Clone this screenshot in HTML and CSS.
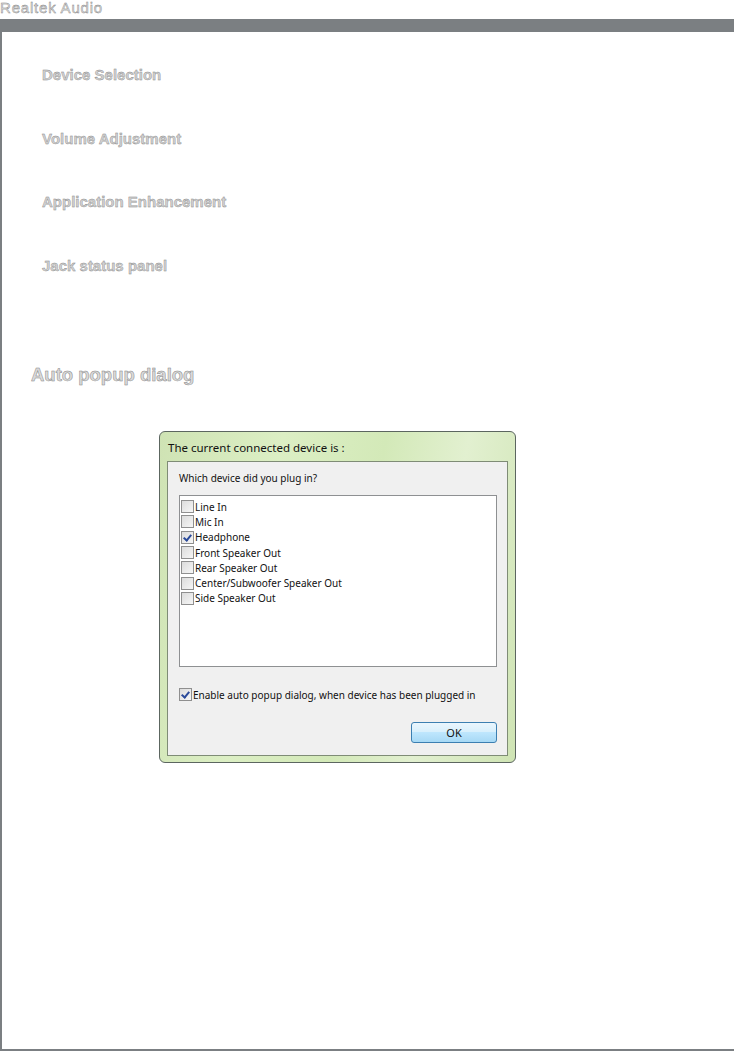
FILE: index.html
```html
<!DOCTYPE html>
<html lang="en">
<head>
  <meta charset="UTF-8" />
  <meta name="viewport" content="width=device-width, initial-scale=1.0"/>
  <title>Realtek Audio</title>
  <link rel="stylesheet" href="styles.css">
</head>
<body>
  <h1 class="page-title">Realtek Audio</h1>

  <div class="frame">
    <ul class="sections">
      <li>Device Selection</li>
      <li>Volume Adjustment</li>
      <li>Application Enhancement</li>
      <li>Jack status panel</li>
    </ul>

    <h2 class="subhead">Auto popup dialog</h2>

    <div class="dialog">
      <div class="dialog-title">The current connected device is :</div>
      <div class="dialog-body">
        <p class="question">Which device did you plug in?</p>
        <div class="listbox">
          <label class="item"><span class="box"></span>Line In</label>
          <label class="item"><span class="box"></span>Mic In</label>
          <label class="item"><span class="box checked"></span>Headphone</label>
          <label class="item"><span class="box"></span>Front Speaker Out</label>
          <label class="item"><span class="box"></span>Rear Speaker Out</label>
          <label class="item"><span class="box"></span>Center/Subwoofer Speaker Out</label>
          <label class="item"><span class="box"></span>Side Speaker Out</label>
        </div>
        <label class="item enable"><span class="box checked"></span>Enable auto popup dialog, when device has been plugged in</label>
        <div class="actions">
          <button class="ok-btn">OK</button>
        </div>
      </div>
    </div>
  </div>
</body>
</html>
```

FILE: styles.css
```css
body {
  margin: 0;
  background: #fff;
  font-family: 'Liberation Sans', Arial, sans-serif;
}

.page-title {
  margin: 0;
  height: 19px;
  font-size: 15px;
  line-height: 15px;
  letter-spacing: 0.8px;
  font-weight: normal;
  color: #dcdcdc;
  -webkit-text-stroke: 0.4px #7f7f7f;
}

.frame {
  height: 1032px;
  box-sizing: border-box;
  border-top: 13px solid #7b7f82;
  border-left: 2px solid #7b7f82;
  border-bottom: 2px solid #7b7f82;
  padding-top: 33px;
}

.sections {
  list-style: none;
  margin: 0;
  padding: 0 0 0 40px;
}

.sections li {
  height: 63.5px;
  font-size: 15px;
  line-height: 20px;
  font-weight: bold;
  color: #d2d2d2;
  -webkit-text-stroke: 0.4px #888;
}

.subhead {
  margin: 44px 0 0 29px;
  font-size: 18.5px;
  line-height: 24px;
  font-weight: bold;
  color: #dadada;
  -webkit-text-stroke: 0.5px #888;
}

.dialog {
  width: 357px;
  height: 332px;
  margin: 44px 0 0 157px;
  box-sizing: border-box;
  border: 1px solid #5c6660;
  border-radius: 6px;
  background: linear-gradient(100deg, #cfe3b4 0%, #dcefc4 30%, #d3e9b8 55%, #e2f0d0 75%, #cfe4b4 100%);
  padding: 0 7px 7px 7px;
  font-family: 'Noto Sans', 'Open Sans', sans-serif;
  color: #111;
}

.dialog-title {
  height: 29px;
  font-size: 11.5px;
  line-height: 31px;
  padding-left: 1px;
}

.dialog-body {
  height: 295px;
  box-sizing: border-box;
  border: 1px solid #7f8c76;
  background: #f0f0f0;
  padding: 8px 10px 0 11px;
}

.question {
  margin: 0;
  font-size: 10px;
  line-height: 17px;
}

.listbox {
  height: 172px;
  box-sizing: border-box;
  margin-top: 8px;
  border: 1px solid #8e9092;
  background: #fff;
  padding: 3px 0 0 1px;
}

.item {
  display: flex;
  align-items: center;
  height: 15.3px;
  font-size: 10px;
  white-space: nowrap;
}

.box {
  position: relative;
  flex: none;
  width: 11px;
  height: 11px;
  margin-right: 1px;
  border: 1px solid #8f8f8f;
  background: linear-gradient(135deg, #dcdcdc, #f6f6f6);
}

.box.checked::after {
  content: "";
  position: absolute;
  left: 3px;
  top: 1px;
  width: 3px;
  height: 6px;
  border: solid #2a4a9a;
  border-width: 0 2px 2px 0;
  transform: rotate(40deg);
}

.enable {
  margin-top: 20px;
}

.actions {
  display: flex;
  justify-content: flex-end;
  margin-top: 20px;
}

.ok-btn {
  width: 86px;
  height: 21px;
  border: 1px solid #3c7fb1;
  border-radius: 3px;
  background: linear-gradient(#eaf6fd 0%, #d9f0fc 45%, #bee6fd 50%, #a7d9f5 100%);
  font-family: 'Noto Sans', 'Open Sans', sans-serif;
  font-size: 11px;
  color: #111;
  padding: 0;
}
```
